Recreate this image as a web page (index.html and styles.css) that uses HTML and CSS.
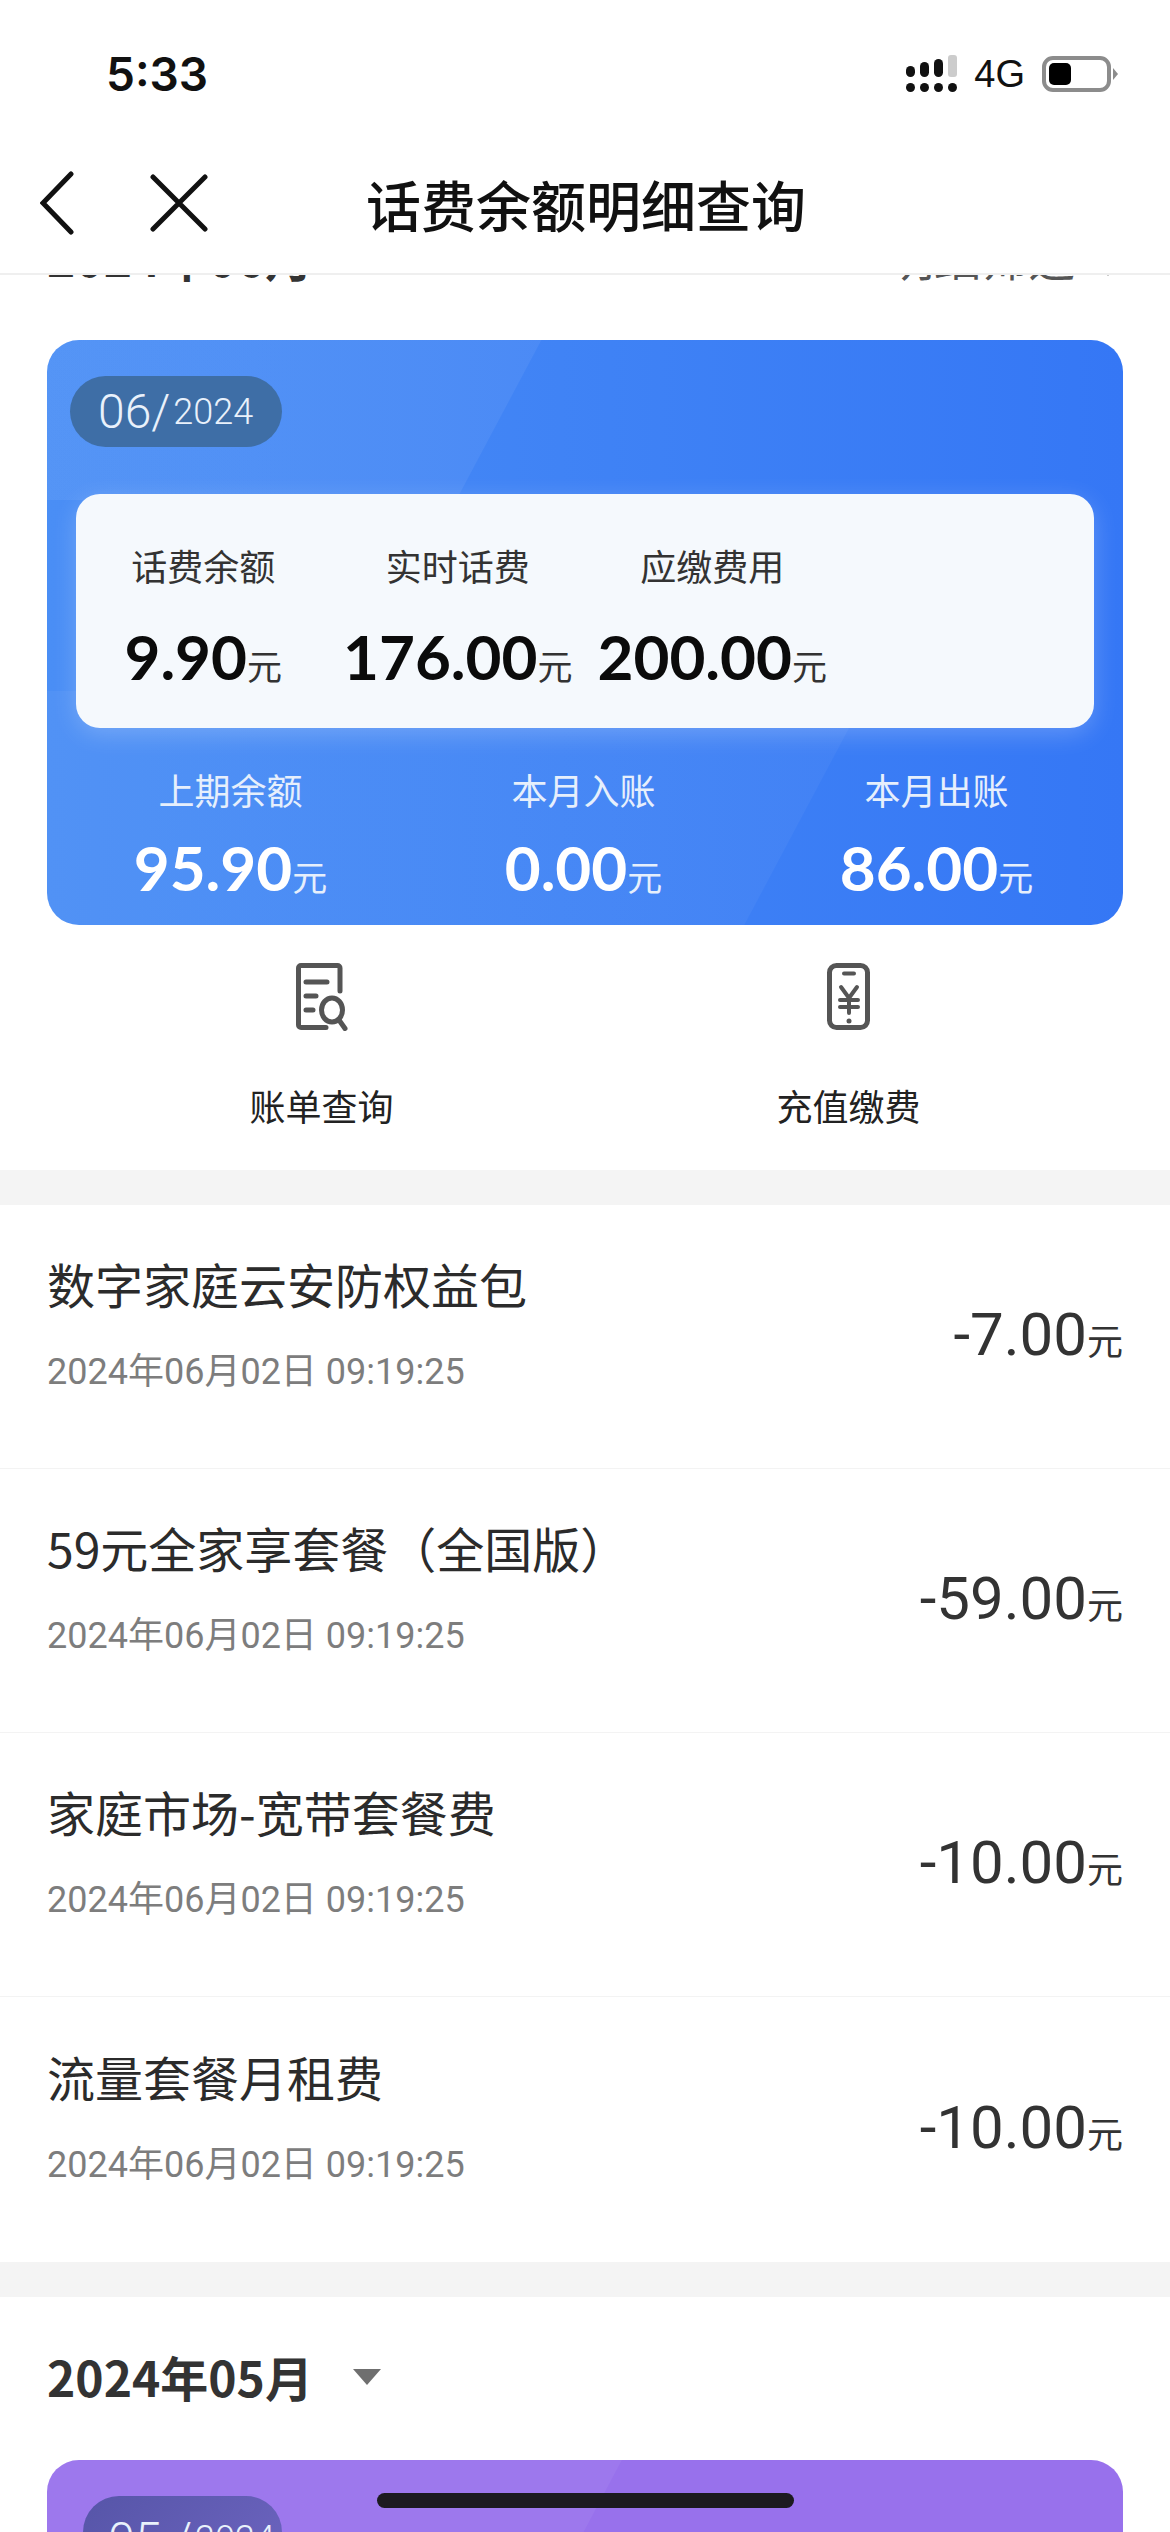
FILE: index.html
```html
<!DOCTYPE html>
<html lang="zh-CN">
<head>
    <meta charset="UTF-8">
    <title>话费余额明细查询</title>
    <link rel="stylesheet" href="styles.css">
</head>
<body>
<div class="g-page">
    <header class="g-top">
        <div class="m-status">
            <span class="u-time">5:33</span>
            <div class="m-status-right">
                <svg class="u-signal" width="52" height="38" viewBox="0 0 52 38" fill="#111">
                    <rect x="0" y="11" width="9" height="11" rx="4.5"/>
                    <rect x="14" y="7" width="9" height="15" rx="4.5"/>
                    <rect x="28" y="4" width="9" height="18" rx="4.5"/>
                    <rect x="42" y="0" width="9" height="22" rx="3" fill="#ccc"/>
                    <circle cx="4.5" cy="32.5" r="4.5"/>
                    <circle cx="18.5" cy="32.5" r="4.5"/>
                    <circle cx="32.5" cy="32.5" r="4.5"/>
                    <circle cx="46.5" cy="32.5" r="4.5"/>
                </svg>
                <span class="u-net">4G</span>
                <div class="u-battery"><i></i></div>
                <div class="u-battery-cap"></div>
            </div>
        </div>
        <nav class="m-nav">
            <svg class="u-back" width="34" height="64" viewBox="0 0 34 64" fill="none" stroke="#111" stroke-width="5" stroke-linecap="round">
                <path d="M31 3L3 32l28 29"/>
            </svg>
            <svg class="u-close" width="58" height="58" viewBox="0 0 58 58" fill="none" stroke="#111" stroke-width="5" stroke-linecap="round">
                <path d="M3 3l52 52M55 3L3 55"/>
            </svg>
            <h1>话费余额明细查询</h1>
        </nav>
    </header>

    <main class="g-main">
        <div class="m-month m-month-first">
            <span>2024年06月</span>
            <span class="u-filter">明细筛选</span>
            <i class="u-tri u-tri-small"></i>
        </div>

        <section class="m-card">
            <div class="u-pill"><b>06/</b><span>2024</span></div>
            <div class="m-panel">
                <div class="m-stat">
                    <p>话费余额</p>
                    <div class="u-num">9.90<small>元</small></div>
                </div>
                <div class="m-stat">
                    <p>实时话费</p>
                    <div class="u-num">176.00<small>元</small></div>
                </div>
                <div class="m-stat">
                    <p>应缴费用</p>
                    <div class="u-num">200.00<small>元</small></div>
                </div>
            </div>
            <div class="m-sum">
                <div class="m-stat">
                    <p>上期余额</p>
                    <div class="u-num">95.90<small>元</small></div>
                </div>
                <div class="m-stat">
                    <p>本月入账</p>
                    <div class="u-num">0.00<small>元</small></div>
                </div>
                <div class="m-stat">
                    <p>本月出账</p>
                    <div class="u-num">86.00<small>元</small></div>
                </div>
            </div>
        </section>

        <div class="m-links">
            <a>
                <svg width="52" height="68" viewBox="0 0 52 68" fill="none" stroke="#555" stroke-width="5" stroke-linecap="round" stroke-linejoin="round">
                    <path d="M44 28V5a2.5 2.5 0 0 0-2.5-2.5H5A2.5 2.5 0 0 0 2.5 5v57A2.5 2.5 0 0 0 5 64.5h25"/>
                    <path d="M10 19h21M10 33h10M10 47h7"/>
                    <ellipse cx="36" cy="47" rx="10.5" ry="12"/>
                    <path d="M43 57l6 8.5"/>
                </svg>
                <span>账单查询</span>
            </a>
            <a>
                <svg width="44" height="68" viewBox="0 0 44 68" fill="none" stroke="#555" stroke-width="5" stroke-linecap="round" stroke-linejoin="round">
                    <rect x="2.5" y="2.5" width="38" height="62" rx="7"/>
                    <path d="M17 10.500h10" stroke-width="4"/>
                    <path d="M14 24l8 11 8-11M22 35v15M13 37h18M13 44h18" stroke-width="4"/>
                    <circle cx="22" cy="58" r="2.500" fill="#555" stroke="none"/>
                </svg>
                <span>充值缴费</span>
            </a>
        </div>

        <div class="u-band"></div>

        <ul class="m-list">
            <li>
                <div class="m-item-left">
                    <h3>数字家庭云安防权益包</h3>
                    <p>2024年06月02日 09:19:25</p>
                </div>
                <div class="u-amount">-7.00<small>元</small></div>
            </li>
            <li>
                <div class="m-item-left">
                    <h3>59元全家享套餐（全国版）</h3>
                    <p>2024年06月02日 09:19:25</p>
                </div>
                <div class="u-amount">-59.00<small>元</small></div>
            </li>
            <li>
                <div class="m-item-left">
                    <h3>家庭市场-宽带套餐费</h3>
                    <p>2024年06月02日 09:19:25</p>
                </div>
                <div class="u-amount">-10.00<small>元</small></div>
            </li>
            <li>
                <div class="m-item-left">
                    <h3>流量套餐月租费</h3>
                    <p>2024年06月02日 09:19:25</p>
                </div>
                <div class="u-amount">-10.00<small>元</small></div>
            </li>
        </ul>

        <div class="u-band"></div>

        <div class="m-month">
            <span>2024年05月</span>
            <i class="u-tri"></i>
        </div>

        <section class="m-card m-card-purple">
            <div class="u-pill"><b>05 /</b><span>2024</span></div>
        </section>
    </main>

    <div class="u-homebar"></div>
</div>
</body>
</html>
```

FILE: styles.css
```css
* {
    padding: 0;
    margin: 0;
    box-sizing: border-box;
}

html, body {
    background: #fff;
}

body {
    font-family: "Noto Sans CJK SC", "Liberation Sans", sans-serif;
    color: #2b2b2b;
}

ul {
    list-style: none;
}

.g-page {
    position: relative;
    width: 1170px;
    height: 2532px;
    overflow: hidden;
}

/* 顶部状态栏 + 导航 */
.g-top {
    position: relative;
    z-index: 2;
    height: 275px;
    background: #fff;
    border-bottom: 2px solid #efefef;
}

.m-status {
    display: flex;
    justify-content: space-between;
    align-items: center;
    height: 150px;
    padding: 0 52px 2px 106px;
}

.u-time {
    font-family: Inter, "Liberation Sans", sans-serif;
    font-size: 46px;
    font-weight: 600;
    color: #111;
}

.m-status-right {
    display: flex;
    align-items: center;
}

.u-net {
    font-family: "Liberation Sans", sans-serif;
    font-size: 38px;
    color: #111;
    margin-left: 16px;
}

.u-battery {
    width: 69px;
    height: 36px;
    margin-left: 17px;
    padding: 3px;
    border: 4px solid #8c8c8c;
    border-radius: 11px;
}

.u-battery i {
    display: block;
    width: 22px;
    height: 100%;
    background: #000;
    border-radius: 5px;
}

.u-battery-cap {
    width: 0;
    height: 0;
    margin-left: 2px;
    border-left: 5px solid #8c8c8c;
    border-top: 6px solid transparent;
    border-bottom: 6px solid transparent;
}

.m-nav {
    display: flex;
    align-items: center;
    height: 110px;
    padding: 0 0 4px 40px;
}

.u-close {
    margin-left: 76px;
}

.m-nav h1 {
    margin-left: 158px;
    font-size: 55px;
    font-weight: 500;
    color: #111;
}

/* 月份 */
.g-main {
    margin-top: -98px;
}

.m-month {
    display: flex;
    align-items: center;
    height: 163px;
    padding: 0 47px 6px;
    font-size: 48px;
    font-weight: 700;
    color: #333;
    line-height: 1;
}

.m-month-first .u-filter {
    margin-left: auto;
    font-size: 47px;
    font-weight: 400;
    color: #555;
}

.u-tri {
    width: 0;
    height: 0;
    margin: 2px 0 0 40px;
    border-top: 16px solid #6f6f6f;
    border-left: 14px solid transparent;
    border-right: 14px solid transparent;
}

.u-tri-small {
    margin: 30px 8px 0 26px;
    border-top-width: 10px;
    border-left-width: 7px;
    border-right-width: 7px;
}

/* 卡片 */
.m-card {
    width: 1076px;
    height: 585px;
    margin: 0 47px;
    padding: 36px 29px 0;
    border-radius: 32px;
    background:
        linear-gradient(118deg, rgba(255, 255, 255, .06) 0, rgba(255, 255, 255, .06) 436px, transparent 437px) no-repeat top / 100% 160px,
        linear-gradient(118deg, rgba(255, 255, 255, .04) 0, rgba(255, 255, 255, .04) 725px, transparent 726px) no-repeat bottom / 100% 234px,
        linear-gradient(90deg, #4a8ef5, #3577f5);
}

.u-pill {
    display: flex;
    align-items: center;
    width: 212px;
    height: 71px;
    margin-left: -6px;
    padding: 0 0 0 28px;
    border-radius: 36px;
    background: #3e6ea6;
    color: #e9f1fb;
    font-family: Roboto, sans-serif;
    font-size: 36px;
    font-weight: 300;
}

.u-pill b {
    margin-right: 3px;
    font-size: 48px;
    font-weight: 300;
}

.m-panel {
    display: grid;
    grid-template-columns: repeat(4, 1fr);
    height: 234px;
    margin-top: 47px;
    padding-top: 41px;
    border-radius: 24px;
    background: #f5f9fd;
    box-shadow: 0 6px 24px rgba(255, 255, 255, .22);
}

.m-stat {
    text-align: center;
}

.m-stat p {
    font-size: 36px;
    line-height: 60px;
    color: #333;
}

.m-stat .u-num {
    margin-top: 30px;
    font-family: Lato, "Noto Sans CJK SC", sans-serif;
    font-size: 62px;
    font-weight: 700;
    line-height: 62px;
    color: #0b0b0b;
    white-space: nowrap;
}

.u-num small {
    font-family: "Noto Sans CJK SC", sans-serif;
    font-size: 35px;
    font-weight: 400;
    color: #333;
}

.m-sum {
    display: grid;
    grid-template-columns: repeat(3, 353px);
    margin: 31px 0 0 -22px;
}

.m-sum .m-stat p {
    color: #e6effc;
}

.m-sum .m-stat .u-num {
    margin-top: 17px;
    color: #fff;
}

.m-sum .u-num small {
    color: #e6effc;
}

/* 快捷入口 */
.m-links {
    display: grid;
    grid-template-columns: repeat(2, 527px);
    height: 245px;
    padding: 38px 0 0 58px;
}

.m-links a {
    display: flex;
    flex-direction: column;
    align-items: center;
}

.m-links span {
    margin-top: 46px;
    font-size: 36px;
    line-height: 56px;
    color: #222;
}

.u-band {
    height: 35px;
    background: #f4f4f4;
}

/* 明细 */
.m-list li {
    display: flex;
    justify-content: space-between;
    align-items: center;
    height: 264px;
    padding: 0 47px 26px;
    border-bottom: 1px solid #f3f3f3;
}

.m-list li:last-child {
    height: 265px;
    border-bottom: none;
}

.m-item-left h3 {
    font-size: 48px;
    font-weight: 400;
    line-height: 58px;
    color: #2b2b2b;
}

.m-item-left p {
    margin-top: 38px;
    font-family: Roboto, "Noto Sans CJK SC", sans-serif;
    font-size: 36px;
    line-height: 44px;
    color: #7d7d7d;
}

.u-amount {
    margin-top: 22px;
    font-family: Roboto, sans-serif;
    font-size: 60px;
    color: #333;
}

.u-amount small {
    font-family: "Noto Sans CJK SC", sans-serif;
    font-size: 36px;
}

.m-card-purple {
    background:
        linear-gradient(118deg, rgba(255, 255, 255, .05) 0, rgba(255, 255, 255, .05) 507px, transparent 508px) no-repeat,
        #9871ec;
}

.m-card-purple .u-pill {
    width: 199px;
    height: 86px;
    margin-left: 7px;
    padding-left: 25px;
    background: linear-gradient(135deg, #5655a8, #6d64c0);
}

.u-homebar {
    position: absolute;
    left: 377px;
    top: 2493px;
    width: 417px;
    height: 15px;
    border-radius: 8px;
    background: #1c1a20;
}
```
